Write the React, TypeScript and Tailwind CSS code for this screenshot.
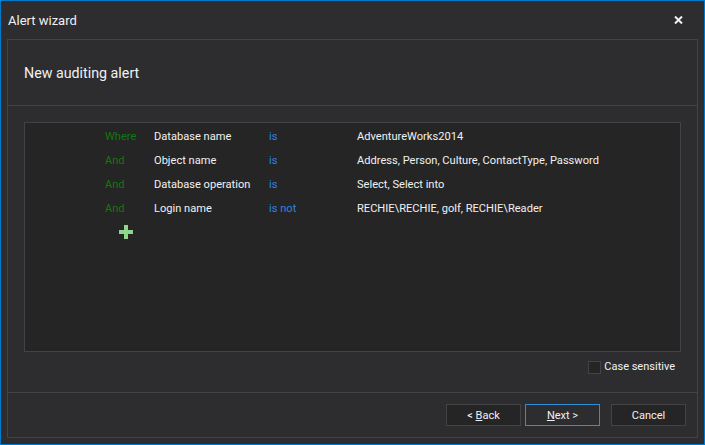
const rows = [
  { joiner: "Where", field: "Database name", op: "is", value: "AdventureWorks2014" },
  { joiner: "And", field: "Object name", op: "is", value: "Address, Person, Culture, ContactType, Password" },
  { joiner: "And", field: "Database operation", op: "is", value: "Select, Select into" },
  { joiner: "And", field: "Login name", op: "is not", value: "RECHIE\\RECHIE, golf, RECHIE\\Reader" },
];

function WizardButton({ children, active }: { children: React.ReactNode; active?: boolean }) {
  return (
    <button
      className={`flex h-[22px] w-[75px] items-center justify-center border pt-[2px] text-[11px] text-[#f1f1f1] ${
        active ? "border-[#2d8fd8] bg-[#2d2d30]" : "border-[#434346] bg-[#252526]"
      }`}
    >
      {children}
    </button>
  );
}

export default function App() {
  return (
    <div className="flex h-[445px] w-[705px] flex-col border border-[#007acc] bg-[#2d2d30] font-['Roboto',sans-serif] text-[#f1f1f1]">
      <div className="flex h-[38px] shrink-0 items-center justify-between pl-[7px] pr-[21px]">
        <span className="mt-[2px] text-[13px]">Alert wizard</span>
        <svg width="9" height="8" viewBox="0 0 9 8" className="text-[#f1f1f1]">
          <path d="M1 0.5l7 7M8 0.5l-7 7" stroke="currentColor" strokeWidth="2" />
        </svg>
      </div>
      <div className="mx-[6px] mb-[6px] flex flex-1 flex-col border border-[#434346]">
        <div className="flex h-[66px] shrink-0 items-center border-b border-[#434346] pl-[16px] pt-[2px] text-[14.25px]">
          New auditing alert
        </div>
        <div className="flex flex-1 flex-col px-[16px] pt-[16px]">
          <div className="flex h-[230px] flex-col border border-[#434346] bg-[#252526] pl-[80px] pt-[2px] text-[11.1px]">
            {rows.map((r) => (
              <div key={r.field + r.value} className="flex h-[24px] shrink-0 items-center">
                <span className="w-[49px] text-[#0e7a0d]">{r.joiner}</span>
                <span className="w-[115px]">{r.field}</span>
                <span className="w-[88px] text-[#2b84e0]">{r.op}</span>
                <span>{r.value}</span>
              </div>
            ))}
            <div className="ml-[14px] mt-[4px]">
              <svg width="14" height="14" viewBox="0 0 14 14">
                <path d="M5 0h4v5h5v4H9v5H5V9H0V5h5z" fill="#8fd68f" />
              </svg>
            </div>
          </div>
          <div className="flex flex-1 items-center justify-end gap-[3px] pb-[9px] pr-[6px] text-[11px]">
            <span className="h-[13px] w-[13px] border border-[#434346] bg-[#252526]" />
            <span>Case sensitive</span>
          </div>
        </div>
        <div className="flex h-[45px] shrink-0 items-center border-t border-[#434346] pl-[438px]">
          <WizardButton>
            &lt;&nbsp;<span className="underline">B</span>ack
          </WizardButton>
          <span className="ml-[4px]">
            <WizardButton active>
              <span className="underline">N</span>ext &gt;
            </WizardButton>
          </span>
          <span className="ml-[11px]">
            <WizardButton>Cancel</WizardButton>
          </span>
        </div>
      </div>
    </div>
  );
}
